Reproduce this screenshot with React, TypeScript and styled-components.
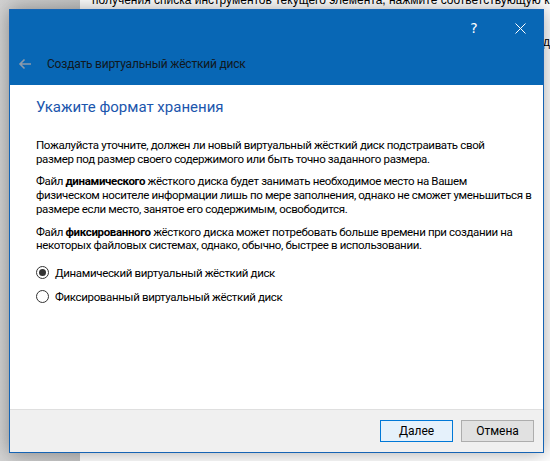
import React, { useState } from 'react'
import styled, { createGlobalStyle } from 'styled-components'

const uiFont = `Roboto, 'Liberation Sans', Arial, sans-serif`

const GlobalStyle = createGlobalStyle`
  html, body {
    margin: 0;
    padding: 0;
    width: 550px;
    height: 461px;
    overflow: hidden;
  }
  body {
    font-family: ${uiFont};
    font-size: 12px;
  }
`

const Desktop = styled.div`
  position: relative;
  width: 550px;
  height: 461px;
  display: grid;
  grid-template-columns: 80px 1fr;
  overflow: hidden;
`

const SidePane = styled.div`
  background: linear-gradient(to right, #d2d2d2, #c6c6c6);
`

const BackPane = styled.div`
  background: #ffffff;
  color: #000;
  font-family: 'Liberation Sans', Arial, sans-serif;
  font-size: 12px;
  line-height: 14px;
  padding-left: 12px;
  margin-top: -7px;
  white-space: nowrap;
`

const BackLine = styled.div<{ indent?: number }>`
  padding-left: ${({ indent }) => indent ?? 0}px;
  height: 14px;
`

const Window = styled.div`
  position: absolute;
  left: 9px;
  top: 9px;
  width: 535px;
  height: 444px;
  box-sizing: border-box;
  border: 1px solid #1664b4;
  display: flex;
  flex-direction: column;
  box-shadow: 0 0 18px rgba(0, 0, 0, 0.35);
  background: #fff;
`

const Caption = styled.div`
  background: #0867b5;
  height: 36px;
  display: flex;
  justify-content: flex-end;
  align-items: center;
`

const CaptionButton = styled.span`
  color: #fff;
  font-size: 14px;
  width: 46px;
  height: 30px;
  display: flex;
  align-items: center;
  justify-content: center;
  font-family: 'DejaVu Sans', sans-serif;
`

const WizardHeader = styled.div`
  background: #0867b5;
  height: 39px;
  display: flex;
  align-items: center;
  padding: 0 0 4px 8px;
  box-sizing: border-box;
`

const BackArrow = styled.span`
  display: flex;
  width: 14px;
  margin-right: 15px;
`

const HeaderTitle = styled.span`
  color: #101820;
  font-size: 12px;
  letter-spacing: -0.2px;
`

const Body = styled.div`
  flex: 1;
  padding: 12px 0 0 26px;
  background: #fff;
  font-size: 11.5px;
  letter-spacing: -0.35px;
`

const Heading = styled.div`
  color: #1b56ad;
  font-size: 15px;
  line-height: 20px;
  margin-bottom: 22px;
  letter-spacing: 0;
`

const Paragraph = styled.p`
  margin: 0 0 9px 0;
  line-height: 13.7px;
  color: #000;
  white-space: nowrap;
`

const RadioList = styled.div`
  display: flex;
  flex-direction: column;
  gap: 10px;
  margin-top: 13px;
`

const RadioRow = styled.label`
  display: flex;
  align-items: center;
  gap: 6px;
  height: 14px;
  cursor: default;
`

const RadioCircle = styled.span<{ checked: boolean }>`
  width: 13px;
  height: 13px;
  box-sizing: border-box;
  border: 1px solid #333;
  border-radius: 50%;
  background: #fff;
  display: flex;
  align-items: center;
  justify-content: center;
  &::after {
    content: '';
    width: 7px;
    height: 7px;
    border-radius: 50%;
    background: ${({ checked }) => (checked ? '#333' : 'transparent')};
  }
`

const Footer = styled.div`
  height: 43px;
  background: #f0f0f0;
  border-top: 1px solid #dfdfdf;
  display: flex;
  justify-content: flex-end;
  align-items: center;
  gap: 8px;
  padding-right: 9px;
  box-sizing: border-box;
`

const Button = styled.button<{ primary?: boolean }>`
  width: 73px;
  height: 22px;
  font-family: ${uiFont};
  font-size: 12px;
  color: #000;
  background: ${({ primary }) => (primary ? '#e5f1fb' : '#e1e1e1')};
  border: 1px solid ${({ primary }) => (primary ? '#0078d7' : '#adadad')};
  padding: 0;
`

export default function App() {
  const [format, setFormat] = useState<'dynamic' | 'fixed'>('dynamic')

  return (
    <Desktop>
      <GlobalStyle />
      <SidePane />
      <BackPane>
        <BackLine>получения списка инструментов текущего элемента, нажмите соответствующую кнопку</BackLine>
        <BackLine />
        <BackLine />
        <BackLine indent={451}>дл</BackLine>
      </BackPane>
      <Window>
        <Caption>
          <CaptionButton>?</CaptionButton>
          <CaptionButton>
            <svg width="11" height="11" viewBox="0 0 11 11">
              <path d="M0.5 0.5 L10.5 10.5 M10.5 0.5 L0.5 10.5" stroke="#fff" strokeWidth="1" />
            </svg>
          </CaptionButton>
        </Caption>
        <WizardHeader>
          <BackArrow>
            <svg width="14" height="12" viewBox="0 0 14 12">
              <path d="M13 6 H2 M6.5 1.5 L2 6 L6.5 10.5" stroke="#8c9aab" strokeWidth="1.6" fill="none" />
            </svg>
          </BackArrow>
          <HeaderTitle>Создать виртуальный жёсткий диск</HeaderTitle>
        </WizardHeader>
        <Body>
          <Heading>Укажите формат хранения</Heading>
          <Paragraph>
            Пожалуйста уточните, должен ли новый виртуальный жёсткий диск подстраивать свой
            <br />
            размер под размер своего содержимого или быть точно заданного размера.
          </Paragraph>
          <Paragraph>
            Файл <b>динамического</b> жёсткого диска будет занимать необходимое место на Вашем
            <br />
            физическом носителе информации лишь по мере заполнения, однако не сможет уменьшиться в
            <br />
            размере если место, занятое его содержимым, освободится.
          </Paragraph>
          <Paragraph>
            Файл <b>фиксированного</b> жёсткого диска может потребовать больше времени при создании на
            <br />
            некоторых файловых системах, однако, обычно, быстрее в использовании.
          </Paragraph>
          <RadioList>
            <RadioRow onClick={() => setFormat('dynamic')}>
              <RadioCircle checked={format === 'dynamic'} />
              Динамический виртуальный жёсткий диск
            </RadioRow>
            <RadioRow onClick={() => setFormat('fixed')}>
              <RadioCircle checked={format === 'fixed'} />
              Фиксированный виртуальный жёсткий диск
            </RadioRow>
          </RadioList>
        </Body>
        <Footer>
          <Button primary>Далее</Button>
          <Button>Отмена</Button>
        </Footer>
      </Window>
    </Desktop>
  )
}
